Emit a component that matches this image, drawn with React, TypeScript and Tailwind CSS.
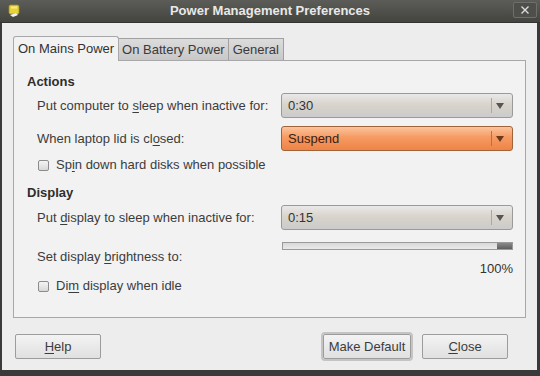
import React from 'react'

const font = { fontFamily: '"Liberation Sans", Arial, sans-serif' }

function Mn({ pre, key1, post }: { pre: string; key1: string; post: string }) {
  return (
    <span>
      {pre}
      <span className="underline underline-offset-2">{key1}</span>
      {post}
    </span>
  )
}

function Combo({ value, orange }: { value: string; orange?: boolean }) {
  return (
    <div
      className={`w-[232px] h-[25px] rounded-[3px] border flex items-center pl-[6px] pr-[5px] ${
        orange
          ? 'border-[#a0643a] bg-[linear-gradient(#fbc49c,#f69a62_45%,#ee8448)] text-[#3a2010]'
          : 'border-[#9a9a9a] bg-[linear-gradient(#e9e9e9,#d9d4cc_45%,#cbcbcb)] text-[#333]'
      }`}
    >
      <span className="flex-1 text-[13px]">{value}</span>
      <div className={`w-px h-[15px] ${orange ? 'bg-[#b8703e]' : 'bg-[#a8a8a8]'}`} />
      <svg width="14" height="10" viewBox="0 0 14 10" className="ml-[1px]">
        <path d="M3 2 L11 2 L7 8 Z" fill={orange ? '#6a3a1c' : '#555'} />
      </svg>
    </div>
  )
}

function Check({ children }: { children: React.ReactNode }) {
  return (
    <div className="flex items-center gap-[7px] pl-[11px]">
      <div className="w-[11px] h-[11px] border border-[#8c8c8c] rounded-[2px] bg-[linear-gradient(#f4f4f4,#d8d8d8)]" />
      <span className="text-[13px] text-[#3c3c3c]">{children}</span>
    </div>
  )
}

function Btn({ children, def }: { children: React.ReactNode; def?: boolean }) {
  return (
    <div
      className={`h-[25px] border border-[#9c9c9c] rounded-[2px] bg-[linear-gradient(#f3f3f3,#e0e0e0)] flex items-center justify-center text-[13px] text-[#3c3c3c] ${
        def ? 'outline outline-[2px] outline-[#c4c4c4] w-[88px]' : 'w-[86px]'
      }`}
    >
      {children}
    </div>
  )
}

export default function App() {
  return (
    <div style={font} className="w-[540px] h-[376px] bg-[#3a3a3a] overflow-hidden">
      {/* title bar */}
      <div className="h-[23px] bg-[linear-gradient(#5c5c58,#44443f)] flex items-center relative border-b border-[#333]">
        <svg width="12" height="14" viewBox="0 0 12 14" className="ml-[8px]">
          <rect x="1" y="1" width="10" height="9" rx="1.5" fill="#e8d23a" stroke="#9a8a20" strokeWidth="0.8" />
          <rect x="3" y="2.5" width="6" height="2" fill="#f6ea8a" />
          <path d="M2 11 L8 9 L10 11 L5 13 Z" fill="#f2f2f2" />
        </svg>
        <div className="absolute inset-0 flex items-center justify-center text-[13px] font-bold text-[#e8e8e8]">
          Power Management Preferences
        </div>
        <div className="absolute right-[3px] top-[2px] w-[24px] h-[16px] rounded-[2px] border border-[#6e6e6a] bg-[#4e4e4a] flex items-center justify-center">
          <svg width="10" height="10" viewBox="0 0 10 10">
            <path d="M1.5 1.5 L8.5 8.5 M8.5 1.5 L1.5 8.5" stroke="#dcdcdc" strokeWidth="1.4" />
          </svg>
        </div>
      </div>

      {/* body */}
      <div className="ml-[2px] mr-[3px] h-[347px] bg-[#ededed] pt-[13px] px-[11px] flex flex-col">
        {/* tabs */}
        <div className="flex items-end h-[24px] relative z-10">
          <div className="h-[25px] px-[4px] bg-[#f2f2f2] border border-b-0 border-[#a8a8a8] rounded-t-[3px] flex items-center text-[13px] text-[#333] -mb-px">
            On Mains Power
          </div>
          <div className="h-[22px] px-[3px] bg-[linear-gradient(#dcdcdc,#c8c8c8)] border border-l-0 border-[#a0a0a0] border-b-0 flex items-center text-[13px] text-[#3a3a3a]">
            On Battery Power
          </div>
          <div className="h-[22px] px-[4px] bg-[linear-gradient(#dcdcdc,#c8c8c8)] border border-l-0 border-[#a0a0a0] border-b-0 flex items-center text-[13px] text-[#3a3a3a]">
            General
          </div>
        </div>
        {/* panel */}
        <div className="h-[258px] bg-[#f2f2f2] border border-[#a8a8a8] text-[13px] text-[#3c3c3c] pl-[13px] pt-[11px]">
          <div className="font-bold text-[#2e2e2e] h-[18px]">Actions</div>
          <div className="flex items-center h-[25px] mt-[3px]">
            <span className="pl-[10px] w-[254px]">
              <Mn pre="Put computer to " key1="s" post="leep when inactive for:" />
            </span>
            <Combo value="0:30" />
          </div>
          <div className="flex items-center h-[25px] mt-[8px]">
            <span className="pl-[10px] w-[254px]">
              <Mn pre="When laptop lid is cl" key1="o" post="sed:" />
            </span>
            <Combo value="Suspend" orange />
          </div>
          <div className="h-[18px] mt-[5px] flex items-center">
            <Check>
              <Mn pre="Sp" key1="i" post="n down hard disks when possible" />
            </Check>
          </div>
          <div className="font-bold text-[#2e2e2e] h-[18px] mt-[9px]">Display</div>
          <div className="flex items-center h-[25px] mt-[4px]">
            <span className="pl-[10px] w-[254px]">
              <Mn pre="Put " key1="d" post="isplay to sleep when inactive for:" />
            </span>
            <Combo value="0:15" />
          </div>
          <div className="flex h-[38px] mt-[12px]">
            <span className="pl-[10px] w-[255px] pt-[5px]">
              <Mn pre="Set display " key1="b" post="rightness to:" />
            </span>
            <div className="w-[231px] flex flex-col">
              <div className="h-[8px] border border-[#9a9a9a] bg-[linear-gradient(#d8d8d8,#eaeaea)] flex justify-end">
                <div className="w-[15px] h-full bg-[linear-gradient(#8a8a8a,#5e5e5e)]" />
              </div>
              <div className="text-right mt-[9px] text-[#333]">100%</div>
            </div>
          </div>
          <div className="h-[18px] mt-[-3px] flex items-center">
            <Check>
              <Mn pre="Di" key1="m" post=" display when idle" />
            </Check>
          </div>
        </div>

        {/* buttons */}
        <div className="flex items-center mt-[16px] px-[2px]">
          <Btn>
            <Mn pre="" key1="H" post="elp" />
          </Btn>
          <div className="flex-1" />
          <Btn def>Make Default</Btn>
          <div className="w-[11px]" />
          <Btn>
            <Mn pre="" key1="C" post="lose" />
          </Btn>
          <div className="w-[16px]" />
        </div>
      </div>
    </div>
  )
}
